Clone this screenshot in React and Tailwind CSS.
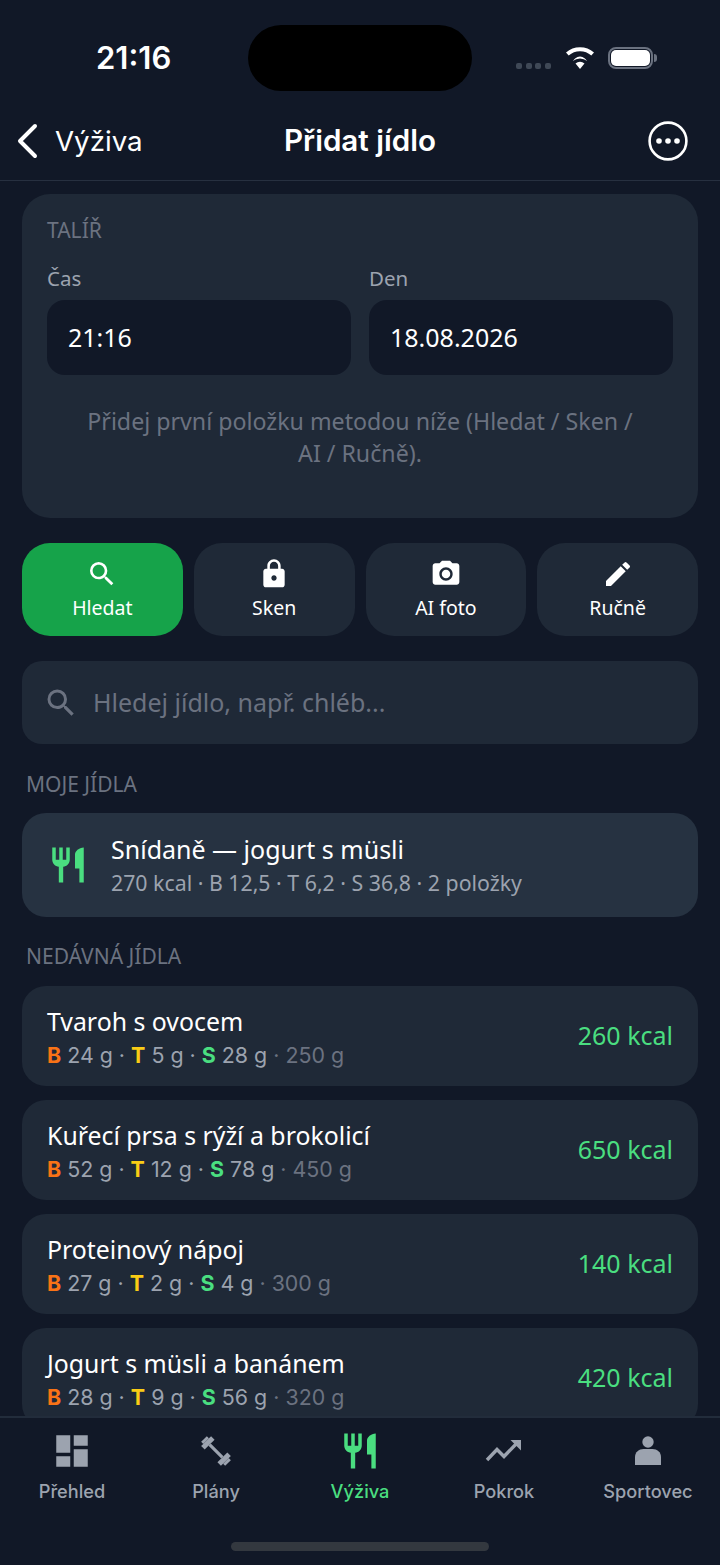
import { MdSearch, MdLock, MdCameraAlt, MdEdit, MdDashboard, MdRestaurant } from "react-icons/md";

const recent = [
    { name: "Tvaroh s ovocem", b: 24, t: 5, s: 28, weight: 250, kcal: 260 },
    { name: "Kuřecí prsa s rýží a brokolicí", b: 52, t: 12, s: 78, weight: 450, kcal: 650 },
    { name: "Proteinový nápoj", b: 27, t: 2, s: 4, weight: 300, kcal: 140 },
    { name: "Jogurt s müsli a banánem", b: 28, t: 9, s: 56, weight: 320, kcal: 420 },
];

const methods = [
    { label: "Hledat", icon: MdSearch, active: true },
    { label: "Sken", icon: MdLock },
    { label: "AI foto", icon: MdCameraAlt },
    { label: "Ručně", icon: MdEdit },
];

function DumbbellIcon({ size }) {
    return (
        <svg width={size} height={size} viewBox="0 0 42 42" fill="currentColor">
            <g transform="rotate(45 21 21)">
                <rect x="4" y="17" width="3" height="8" />
                <rect x="7" y="14" width="5" height="14" />
                <rect x="12" y="19.4" width="18" height="3.2" />
                <rect x="30" y="14" width="5" height="14" />
                <rect x="35" y="17" width="3" height="8" />
            </g>
        </svg>
    );
}

function TrendIcon({ size }) {
    return (
        <svg width={size} height={size} viewBox="0 0 42 42" fill="none" stroke="currentColor" strokeWidth="3.4">
            <path d="M4 30 L14 19.5 L21 26.5 L35 12" />
            <path d="M27.5 10 H38 V20.5 Z" fill="currentColor" stroke="none" />
        </svg>
    );
}

function PersonIcon({ size }) {
    return (
        <svg width={size} height={size} viewBox="0 0 42 42" fill="currentColor">
            <circle cx="21" cy="12" r="5.7" />
            <path d="M8 35 V27 C8 22 12 19 16.5 19 H25.5 C30 19 34 22 34 27 V35 Z" />
        </svg>
    );
}

const tabs = [
    { label: "Přehled", icon: MdDashboard },
    { label: "Plány", icon: DumbbellIcon },
    { label: "Výživa", icon: MdRestaurant, active: true },
    { label: "Pokrok", icon: TrendIcon },
    { label: "Sportovec", icon: PersonIcon },
];

function StatusBar() {
    return (
        <div className="relative h-[110px] shrink-0">
            <span className="absolute left-[96px] top-[40px] text-[31px] leading-[36px] font-semibold text-white font-['Inter']">21:16</span>
            <div className="absolute left-[248px] top-[25px] w-[224px] h-[66px] rounded-full bg-black" />
            <div className="absolute left-[516px] top-[63px] flex gap-[3.5px]">
                <div className="w-[6px] h-[6px] rounded-[2px] bg-[#3f4856]" />
                <div className="w-[6px] h-[6px] rounded-[2px] bg-[#3f4856]" />
                <div className="w-[6px] h-[6px] rounded-[2px] bg-[#3f4856]" />
                <div className="w-[6px] h-[6px] rounded-[2px] bg-[#3f4856]" />
            </div>
            <svg className="absolute left-[565px] top-[46px]" width="30" height="24" viewBox="0 0 30 24" fill="white">
                <path d="M15 23 L10.5 17.5 A7 7 0 0 1 19.5 17.5 Z" />
                <path d="M7.8 14.6 A11 11 0 0 1 22.2 14.6 L19.9 11.9 A8 8 0 0 0 10.1 11.9 Z" transform="translate(0 0.5)" />
                <path d="M1 7.6 A21 21 0 0 1 29 7.6 L26.3 10.6 A17 17 0 0 0 3.7 10.6 Z" transform="translate(0 -1)" />
            </svg>
            <div className="absolute left-[608px] top-[47px] w-[45px] h-[22px] rounded-[8px] border-2 border-[#6b7280] p-[1px]">
                <div className="w-full h-full rounded-[5px] bg-white" />
            </div>
            <div className="absolute left-[654px] top-[54px] w-[3px] h-[8px] rounded-r-full bg-[#6b7280]" />
        </div>
    );
}

function NavBar() {
    return (
        <div className="relative flex items-center justify-between h-[71px] shrink-0 pb-[8px] pl-[14px] pr-[32px] border-b border-[#273040]">
            <div className="flex items-center gap-[13px]">
                <svg width="28" height="36" viewBox="0 0 28 36" fill="none" stroke="white" strokeWidth="4" strokeLinecap="round" strokeLinejoin="round">
                    <path d="M21 3 L6 18 L21 33" />
                </svg>
                <span className="text-[27.7px] leading-[36px] text-white font-['Inter']">Výživa</span>
            </div>
            <span className="absolute left-0 right-0 top-[12px] text-center text-[29.6px] leading-[36px] font-semibold text-white font-['Inter']">Přidat jídlo</span>
            <svg width="40" height="40" viewBox="0 0 40 40" fill="white">
                <circle cx="20" cy="20" r="18.4" fill="none" stroke="white" strokeWidth="2.6" />
                <circle cx="11" cy="20" r="2.8" />
                <circle cx="20" cy="20" r="2.8" />
                <circle cx="29" cy="20" r="2.8" />
            </svg>
        </div>
    );
}

function Plate() {
    return (
        <div className="h-[324px] rounded-[28px] bg-[#1f2937] px-[25px] pt-[22px]">
            <div className="text-[21px] leading-[28px] text-[#6b7280]">TALÍŘ</div>
            <div className="grid grid-cols-2 gap-[18px] mt-[17px]">
                <div>
                    <div className="text-[20.5px] leading-[34px] text-[#9ca3af]">Čas</div>
                    <div className="flex items-center h-[75px] mt-[5px] pl-[21px] rounded-[18px] bg-[#111827] text-[25px] text-white">21:16</div>
                </div>
                <div>
                    <div className="text-[20.5px] leading-[34px] text-[#9ca3af]">Den</div>
                    <div className="flex items-center h-[75px] mt-[5px] pl-[21px] rounded-[18px] bg-[#111827] text-[25px] text-white">18.08.2026</div>
                </div>
            </div>
            <p className="mt-[30px] text-center text-[23.2px] leading-[32px] text-[#6b7280]">
                Přidej první položku metodou níže (Hledat / Sken /<br />AI / Ručně).
            </p>
        </div>
    );
}

function MethodButtons() {
    return (
        <div className="grid grid-cols-4 gap-[11px] mt-[25px]">
            {methods.map((m) => (
                <div
                    key={m.label}
                    className={`flex flex-col items-center h-[93px] pt-[15px] rounded-[28px] text-white ${m.active ? "bg-[#16a34a]" : "bg-[#1f2937]"}`}
                >
                    <m.icon size={32} />
                    <span className="mt-[4px] text-[19.5px] leading-[28px]">{m.label}</span>
                </div>
            ))}
        </div>
    );
}

function FoodRow({ food }) {
    return (
        <div className="flex items-center justify-between h-[100px] shrink-0 rounded-[24px] bg-[#1f2937] pl-[25px] pr-[25px]">
            <div>
                <div className="text-[24.85px] leading-[36px] text-white">{food.name}</div>
                <div className="mt-[1px] text-[21.4px] leading-[30px] text-[#9ca3af] font-['Inter']">
                    <b className="font-bold text-[#f97316]">B</b> {food.b} g ·{" "}
                    <b className="font-bold text-[#facc15]">T</b> {food.t} g ·{" "}
                    <b className="font-bold text-[#4ade80]">S</b> {food.s} g <span className="text-[#6b7280]">· {food.weight} g</span>
                </div>
            </div>
            <span className="text-[25px] text-[#4ade80]">{food.kcal} kcal</span>
        </div>
    );
}

function TabBar() {
    return (
        <div className="relative h-[149px] shrink-0 border-t-2 border-[#222c3b] bg-[#111827]">
            <div className="grid grid-cols-5">
                {tabs.map((t) => (
                    <div key={t.label} className={`flex flex-col items-center pt-[12px] ${t.active ? "text-[#4ade80]" : "text-[#9ca3af]"}`}>
                        <t.icon size={42} />
                        <span className="mt-[5px] text-[18.2px] leading-[28px] font-medium font-['Inter']">{t.label}</span>
                    </div>
                ))}
            </div>
            <div className="absolute left-[231px] bottom-[14px] w-[258px] h-[9px] rounded-full bg-[#33383f]" />
        </div>
    );
}

export default function App() {
    return (
        <div className="flex flex-col w-[720px] h-[1565px] overflow-hidden bg-[#111827] font-['Noto_Sans',sans-serif]">
            <StatusBar />
            <NavBar />
            <div className="flex-1 min-h-0 overflow-hidden px-[22px] pt-[13px]">
                <Plate />
                <MethodButtons />
                <div className="flex items-center gap-[14px] h-[83px] mt-[25px] pl-[21px] rounded-[20px] bg-[#1f2937]">
                    <MdSearch size={36} className="text-[#6b7280]" />
                    <span className="text-[25px] text-[#6b7280]">Hledej jídlo, např. chléb...</span>
                </div>
                <div className="mt-[24px] pl-[4px] text-[21px] leading-[32px] text-[#6b7280]">MOJE JÍDLA</div>
                <div className="flex items-center h-[104px] mt-[13px] pl-[25px] rounded-[24px] bg-[#263241]">
                    <MdRestaurant size={42} className="text-[#4ade80]" />
                    <div className="ml-[22px]">
                        <div className="text-[25px] leading-[36px] text-white -mt-[1px]">Snídaně — jogurt s müsli</div>
                        <div className="text-[21.3px] leading-[32px] text-[#9ca3af]">270 kcal · B 12,5 · T 6,2 · S 36,8 · 2 položky</div>
                    </div>
                </div>
                <div className="mt-[23px] pl-[4px] text-[21px] leading-[32px] text-[#6b7280]">NEDÁVNÁ JÍDLA</div>
                <div className="flex flex-col gap-[14px] mt-[14px]">
                    {recent.map((food) => (
                        <FoodRow key={food.name} food={food} />
                    ))}
                </div>
            </div>
            <TabBar />
        </div>
    );
}
